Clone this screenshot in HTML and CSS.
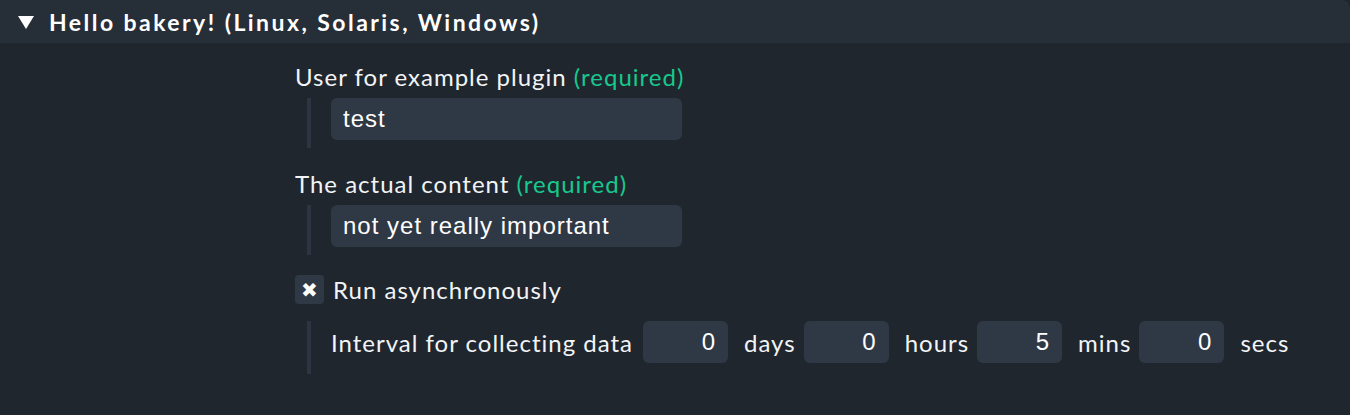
FILE: index.html
```html
<!DOCTYPE html>
<html>
<head>
<meta charset="utf-8">
<link rel="stylesheet" href="styles.css">
</head>
<body>
<div class="panel">
  <div class="head">
    <span class="tri"></span>
    <span class="title">Hello bakery! (Linux, Solaris, Windows)</span>
  </div>
  <div class="body">
    <div class="field">
      <div class="label">User for example plugin <span class="req">(required)</span></div>
      <div class="nest">
        <div class="input wide">test</div>
      </div>
    </div>
    <div class="field">
      <div class="label">The actual content <span class="req">(required)</span></div>
      <div class="nest">
        <div class="input wide">not yet really important</div>
      </div>
    </div>
    <div class="field">
      <div class="check-row">
        <span class="checkbox">✖</span>
        <span class="label">Run asynchronously</span>
      </div>
      <div class="nest nest-last">
        <div class="interval">
          <span class="ilabel">Interval for collecting data</span>
          <span class="input num">0</span><span class="unit">days</span>
          <span class="input num">0</span><span class="unit">hours</span>
          <span class="input num">5</span><span class="unit">mins</span>
          <span class="input num">0</span><span class="unit">secs</span>
        </div>
      </div>
    </div>
  </div>
</div>
</body>
</html>
```

FILE: styles.css
```css
html, body {
  margin: 0;
  padding: 0;
  background: #20262e;
  width: 1350px;
  height: 415px;
  overflow: hidden;
}
body {
  font-family: Lato, "Open Sans", sans-serif;
  color: #f2f4f6;
}
.panel {
  width: 1350px;
  height: 415px;
  background: #20262e;
  border-top-right-radius: 8px;
  overflow: hidden;
}
.head {
  height: 43px;
  background: #262e38;
  display: flex;
  align-items: center;
  padding-left: 18px;
  border-top-right-radius: 8px;
}
.tri {
  width: 0;
  height: 0;
  border-left: 8.5px solid transparent;
  border-right: 8.5px solid transparent;
  border-top: 13px solid #ffffff;
  margin-right: 15px;
  margin-top: 2px;
}
.title {
  font-weight: 700;
  font-size: 23px;
  letter-spacing: 2.45px;
  color: #ffffff;
}
.body {
  padding: 20px 0 0 295px;
  display: flex;
  flex-direction: column;
}
.field {
  margin-bottom: 22px;
}
.label {
  font-size: 24px;
  line-height: 28px;
  letter-spacing: 1px;
}
.req {
  color: #16c98d;
}
.nest {
  margin-left: 12px;
  border-left: 4px solid #2c3541;
  padding-left: 20px;
  margin-top: 7px;
  padding-bottom: 8px;
}
.nest-last {
  margin-top: 17px;
  padding-bottom: 11px;
}
.input {
  background: #2f3945;
  border-radius: 6px;
  font-family: "Liberation Sans", Arial, sans-serif;
  font-size: 24px;
  letter-spacing: 1px;
  color: #ffffff;
  height: 42px;
  line-height: 42px;
  box-sizing: border-box;
}
.wide {
  width: 351px;
  padding-left: 12px;
}
.check-row {
  display: flex;
  align-items: center;
  gap: 9px;
  margin-top: -2px;
}
.checkbox {
  width: 29px;
  height: 29px;
  border-radius: 4px;
  background: #2f3945;
  color: #ffffff;
  display: flex;
  align-items: center;
  justify-content: center;
  font-size: 20px;
  font-family: "DejaVu Sans", sans-serif;
}
.interval {
  display: flex;
  align-items: center;
  font-size: 24px;
  letter-spacing: 1px;
}
.ilabel {
  margin-right: 10px;
}
.num {
  width: 85px;
  text-align: right;
  padding-right: 12px;
  display: inline-block;
}
.unit {
  margin-left: 16px;
  margin-right: 8px;
}
```
